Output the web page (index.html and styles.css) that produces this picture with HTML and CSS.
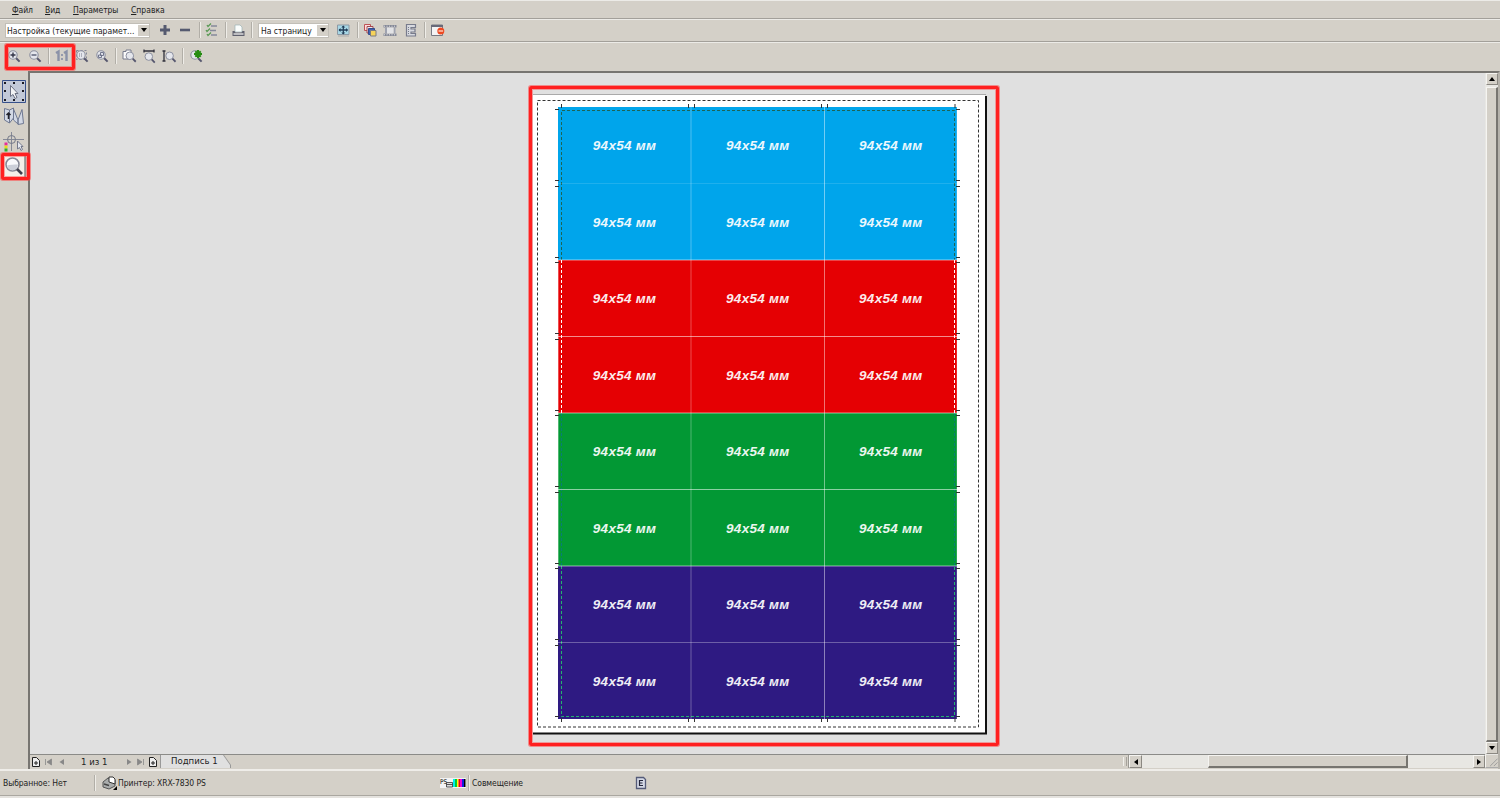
FILE: index.html
```html
<!DOCTYPE html>
<html lang="ru">
<head>
<meta charset="utf-8">
<title>94x54 мм</title>
<link rel="stylesheet" href="styles.css">
</head>
<body>
<svg width="0" height="0" class="defs">
  <defs>
    <g id="lens"><circle cx="7" cy="7" r="4.2" fill="#e4e6ec" stroke="#8b8f9f" stroke-width="1.1"/><path d="M10.2 10.2l3.400 3.400" stroke="#55566e" stroke-width="2"/></g>
  </defs>
</svg>
<nav class="menubar">
  <span class="m-file"><u>Ф</u>айл</span><span class="m-view"><u>В</u>ид</span><span class="m-params"><u>П</u>араметры</span><span class="m-help"><u>С</u>правка</span>
</nav>
<div class="toolbar primary">
  <div class="select wide"><span>Настройка (текущие парамет...</span><i></i></div>
  <svg class="icon g7" viewBox="0 0 16 16"><path d="M3 8h10M8 3v10" stroke="#555a70" stroke-width="3"/></svg>
  <svg class="icon g4" viewBox="0 0 16 16"><path d="M3 8h10" stroke="#555a70" stroke-width="2.6"/></svg>
  <b class="sep g6"></b>
  <svg class="icon g3" viewBox="0 0 16 16"><path d="M7 4h6M6 8.500h6M7 13h6" stroke="#85899a" stroke-width="1.300"/><path d="M3 3l1 1.500 3-3M2 8l1 1.500 3-3M3 12l1 1.500 3-3" fill="none" stroke="#5b9a55" stroke-width="1.300"/></svg>
  <b class="sep g5"></b>
  <svg class="icon g3" viewBox="0 0 16 16"><path d="M5 3h5l2 2v5H5z" fill="#fafdfc" stroke="#9bb2b4" stroke-width=".7"/><path d="M2.500 9h2l1 1.500h6l1-1.500h2v5h-12z" fill="#60616e"/><path d="M3.500 12h10" stroke="#e6e6e6" stroke-width="1.400"/></svg>
  <b class="sep g5"></b>
  <div class="select short g5"><span>На страницу</span><i></i></div>
  <svg class="icon g6" viewBox="0 0 16 16"><path d="M2.500 3h11.500v9.500H2.500z" fill="#a7d7e6" stroke="#8c99a5"/><path d="M4 8h8.500M8.300 4v8" stroke="#233e59" stroke-width="1.300"/><path d="M3.500 8l2-2v4zM13 8l-2-2v4zM8.300 3.500l-2 2h4zM8.300 12.500l-2-2h4z" fill="#233e59"/><path d="M3 14h11" stroke="#aaa"/></svg>
  <b class="sep g6"></b>
  <svg class="icon g3" viewBox="0 0 16 16"><path d="M2.500 2.500h6v6h-6z" fill="#ffdcdc" stroke="#bd5355"/><path d="M5 4.500h6v6.500H5z" fill="#ece9ec" stroke="#a14850"/><path d="M6.500 6.500h6v6h-6z" fill="#4163b1" stroke="#364b89"/><path d="M8.500 8.500h5.500v5.500H8.500z" fill="#f6d35a" stroke="#7a7b80"/></svg>
  <svg class="icon g4" viewBox="0 0 16 16"><path d="M1.500 3h13v2.500h-13zM1.500 11.500h13V14h-13z" fill="#858997"/><path d="M3 5.500h2v6H3zM11.500 5.500h2v6h-2z" fill="#9ea2af"/><path d="M5 5.500h6.500v6H5z" fill="#e2e3e6"/><path d="M2 4.200h12M2 12.800h12" stroke="#e0e0e4" stroke-dasharray="1 1.500"/></svg>
  <svg class="icon g5" viewBox="0 0 16 16"><path d="M3.500 2.500h9v3H8V7h4v3H8v1.500h4.500v2.500h-9z" fill="#d7d9df" stroke="#777b8c" stroke-width="1.200"/><path d="M5.500 5v7" stroke="#777b8c" stroke-dasharray="1 1"/></svg>
  <b class="sep g5"></b>
  <svg class="icon g3" viewBox="0 0 16 16"><path d="M2.500 3h11v10.500h-11z" fill="#f4f3f4" stroke="#777983"/><path d="M2 4h12" stroke="#686a79" stroke-width="2"/><circle cx="11.800" cy="9" r="3.500" fill="#ed4922"/><path d="M9.500 9h4.600" stroke="#ffe5d8" stroke-width="1.200"/></svg>
</div>
<div class="toolbar secondary">
  <svg class="icon" viewBox="0 0 16 16"><use href="#lens"/><path d="M4.500 7h5M7 4.500v5" stroke="#333548" stroke-width="1.400"/></svg>
  <svg class="icon g5" viewBox="0 0 16 16"><use href="#lens"/><path d="M4.500 7h5" stroke="#555972" stroke-width="1.400"/></svg>
  <b class="sep g5"></b>
  <svg class="icon g4" viewBox="0 0 16 16"><path d="M2 5l2.500-1.500v9.500M10 5l2.500-1.500v9.500" fill="none" stroke="#8b92a8" stroke-width="2.400"/><path d="M8 6v2M8 10v2" stroke="#8b92a8" stroke-width="1.700"/></svg>
  <svg class="icon g4" viewBox="0 0 16 16"><path d="M2.500 2.500h10v9h-10z" fill="none" stroke="#85899a" stroke-dasharray="2 2"/><use href="#lens"/><path d="M5 6h4M5 8h4" stroke="#777b8c" stroke-dasharray="1 1"/></svg>
  <svg class="icon g4" viewBox="0 0 16 16"><use href="#lens"/><path d="M4.500 7h3v2.500h-3zM6.500 4.500h3v3h-3z" fill="#dfe2ea" stroke="#666b83" stroke-width=".9"/></svg>
  <b class="sep g5"></b>
  <svg class="icon g4" viewBox="0 0 16 16"><path d="M2 3.500h3V2h5v9H2z" fill="#fbfbfb" stroke="#777b8c"/><g transform="translate(2.500 1.500) scale(.9)"><use href="#lens"/></g></svg>
  <svg class="icon g4" viewBox="0 0 16 16"><path d="M3 3h10M3 1.500v3M13 1.500v3" stroke="#30313c" stroke-width="1.300"/><g transform="translate(1.500 2.300) scale(.9)"><use href="#lens"/></g></svg>
  <svg class="icon g4" viewBox="0 0 16 16"><path d="M3 3v10M1.500 3h3M1.500 13h3" stroke="#30313c" stroke-width="1.300"/><g transform="translate(2.300 1.500) scale(.9)"><use href="#lens"/></g></svg>
  <b class="sep g5"></b>
  <svg class="icon g4" viewBox="0 0 16 16"><use href="#lens"/><path d="M10 2v8M6 6h8M7.300 3.300l5.400 5.400M12.700 3.300l-5.400 5.400" stroke="#258c12" stroke-width="2"/></svg>
</div>
<main class="main">
  <aside class="tools">
    <svg class="tool" viewBox="0 0 26 25"><path d="M2.500 1.500h23v22h-23z" fill="#c2c9d8" stroke="#37518b"/><g fill="#1b1b24"><path d="M4 3h2v2H4zM13 3h2v2h-2zM22 3h2v2h-2zM4 11h2v2H4zM22 11h2v2h-2zM4 20h2v2H4zM13 20h2v2h-2zM22 20h2v2h-2z"/></g><path d="M10.500 6.500v11l2.500-2 2 4 2-1-2-4h3z" fill="#f2f3f5" stroke="#6c7183"/></svg>
    <svg class="tool" viewBox="0 0 26 25"><path d="M4.500 4.500l5 1.500v13l-5-3zM9.500 6l4-2v10l-4 5zM13.500 5l4.500 11v4l-4.500-4zM18 16l4-10.500 1.500 14-5.500 1z" fill="#d2d8e5" stroke="#6e7892"/><path d="M8.500 15V9M6.500 11l2-2 2 2" fill="none" stroke="#22232c" stroke-width="1.500"/></svg>
    <svg class="tool" viewBox="0 0 26 25"><path d="M3 9.500h21M11.500 2v19" stroke="#858996"/><circle cx="11.500" cy="9.500" r="4" fill="none" stroke="#747989"/><path d="M4.500 12.500h3v3h-3z" fill="#e52c9b"/><path d="M4.500 15.500h3v3h-3z" fill="#e9db19"/><path d="M4.500 18.500h3v3h-3z" fill="#30ac2e"/><path d="M17.500 11v8l2-1.500 1.500 3 1.500-1-1.500-3h2z" fill="#e6e9f0" stroke="#74798b"/></svg>
    <svg class="tool" viewBox="0 0 26 25"><path d="M3 1h22v22H3z" fill="#f4efe8"/><path d="M25 1v22" stroke="#555"/><circle cx="12.500" cy="9.500" r="6.500" fill="#f8f9fb" stroke="#858896" stroke-width="1.500"/><path d="M7 10.500c3-1 7-1 11-1-1 7-9 8-11 1z" fill="#cbcfd8"/><path d="M17 14l5 5" stroke="#3f404e" stroke-width="2.700"/></svg>
  </aside>
  <section class="work">
    <div class="view">
      <div class="canvas">
        <div class="sheet">
          <div class="cards">
            <div class="row cyan"><span>94x54 мм</span><span>94x54 мм</span><span>94x54 мм</span></div>
            <div class="row cyan"><span>94x54 мм</span><span>94x54 мм</span><span>94x54 мм</span></div>
            <div class="row red"><span>94x54 мм</span><span>94x54 мм</span><span>94x54 мм</span></div>
            <div class="row red"><span>94x54 мм</span><span>94x54 мм</span><span>94x54 мм</span></div>
            <div class="row green"><span>94x54 мм</span><span>94x54 мм</span><span>94x54 мм</span></div>
            <div class="row green"><span>94x54 мм</span><span>94x54 мм</span><span>94x54 мм</span></div>
            <div class="row blue"><span>94x54 мм</span><span>94x54 мм</span><span>94x54 мм</span></div>
            <div class="row blue"><span>94x54 мм</span><span>94x54 мм</span><span>94x54 мм</span></div>
          </div>
        </div>
        <svg class="marks" viewBox="528 85 474 664">
          <path d="M533 94.500h453" stroke="#aaa"/>
          <path d="M533 733.500h453V96" fill="none" stroke="#111" stroke-width="2"/>
          <path d="M537.500 100.500h441v626.500h-441z" fill="none" stroke="#333" stroke-dasharray="3 2"/>
          <g fill="none" stroke-dasharray="3 2">
            <path d="M561.500 260V110.500H954.500V260" stroke="#1d6555"/>
            <path d="M561.500 260v153M954.500 260v153" stroke="#fff"/>
            <path d="M561.500 413v153M954.500 413v153" stroke="#087c78"/>
            <path d="M561.500 566v150.500H954.500V566" stroke="#23b36f"/>
          </g>
          <g stroke="#fff" stroke-opacity=".55">
            <path d="M558 260h399M558 336.500h399M558 413h399M558 489.500h399M558 566h399"/>
            <path d="M558 642.500h399M558.500 260v306M957 107v612" stroke-opacity=".3"/>
            <path d="M558 183.500h399" stroke-opacity=".12"/>
            <path d="M691 107v612" stroke-opacity=".3"/><path d="M824.500 107v612" stroke-opacity=".45"/>
          </g>
          <g stroke="#333">
            <path id="ticks" d="M555 109.500h4M555 180.500h4M555 186.500h4M555 257.500h4M555 262.500h4M555 333.500h4M555 339.500h4M555 410.500h4M555 415.500h4M555 486.500h4M555 492.500h4M555 563.500h4M555 568.500h4M555 639.500h4M555 645.500h4M555 716.500h4"/>
            <use href="#ticks" x="401"/>
            <path id="cuts" d="M561.500 104v4M688.500 104v4M694.500 104v4M821.500 104v4M827.500 104v4M955 104v4"/>
            <use href="#cuts" y="614"/>
          </g>
        </svg>
        <div class="hilite h-sheet"></div>
      </div>
      <div class="vscroll"><b class="btn"><i class="up"></i></b><b class="thumb"></b><b class="btn"><i class="down"></i></b></div>
    </div>
    <div class="pager">
      <div class="pages">
        <svg class="pg" viewBox="0 0 10 12"><path d="M1.500 1.500h4l3 3v6h-7z" fill="#eee" stroke="#222"/><path d="M3 7h4M5 5v4" stroke="#222"/></svg>
        <svg class="nav n1" viewBox="0 0 8 10"><path d="M1.500 2v6M7.500 2L3 5l4.500 3z" fill="#888" stroke="#888" stroke-width=".8"/></svg>
        <svg class="nav n2" viewBox="0 0 8 10"><path d="M6 2L1.500 5 6 8z" fill="#888"/></svg>
        <span class="count">1 из 1</span>
        <svg class="nav n3" viewBox="0 0 8 10"><path d="M2 2l4.500 3L2 8z" fill="#888"/></svg>
        <svg class="nav n4" viewBox="0 0 8 10"><path d="M6.500 2v6M.5 2L5 5 .5 8z" fill="#888" stroke="#888" stroke-width=".8"/></svg>
        <svg class="pg n5" viewBox="0 0 10 12"><path d="M1.500 1.500h4l3 3v6h-7z" fill="#eee" stroke="#222"/><path d="M3 7h4M5 5v4" stroke="#222"/></svg>
        <div class="tab"><span>Подпись 1</span></div>
        <b class="splitter"></b>
      </div>
      <div class="hscroll"><b class="btn"><i class="left"></i></b><b class="thumb"></b><b class="btn"><i class="right"></i></b></div>
      <svg class="grip" viewBox="0 0 12 13"><path d="M4 12l8-8M8 12l4-4" stroke="#999"/></svg>
    </div>
  </section>
</main>
<footer class="status">
  <span class="s-sel">Выбранное: Нет</span><b class="sep"></b>
  <svg class="s-prn" viewBox="0 0 15 14"><path d="M1 6l5-4 7 2v6l-6 3-6-2z" fill="#a9acac" stroke="#555"/><path d="M7 6V1h4l2 2v5z" fill="#fff" stroke="#333"/><path d="M2 8l5 1.500" stroke="#444" stroke-width="1.500"/><path d="M15 10v4h-4z" fill="#000"/></svg>
  <span class="s-name">Принтер: XRX-7830 PS</span>
  <svg class="s-ps" viewBox="0 0 26 10"><path d="M0 0h26v10H0z" fill="#f3f3f3"/><text x="0" y="6" class="ps">PS</text><path d="M6.500 4.500h6V9h-6zM6.500 6.500h6" fill="#ddd" stroke="#333" stroke-width=".8"/><path d="M13 1h2v8h-2z" fill="#0ee"/><path d="M15 1h2v8h-2z" fill="#0c3"/><path d="M17 1h1.500v8H17z" fill="#ff0"/><path d="M18.500 1H20v8h-1.500z" fill="#e01"/><path d="M20 1h2v8h-2z" fill="#e0d"/><path d="M22 1h2v8h-2z" fill="#12d"/><path d="M24 1h1.500v8H24z"/></svg>
  <b class="sep s-sep2"></b><span class="s-mode">Совмещение</span>
  <svg class="s-e" viewBox="0 0 12 14"><path d="M1.500 1.500h7l2 2v9h-9z" fill="#d5d9e6" stroke="#555b78" stroke-width="1.300"/><path d="M8 4.500H4.500v5H8M4.500 7h3" fill="none" stroke="#22253a" stroke-width="1.200"/></svg>
</footer>
<div class="hilite h-zoom"></div>
<div class="hilite h-lens"></div>
</body>
</html>
```
FILE: styles.css
```css
* { box-sizing: border-box; }
body {
  margin: 0; width: 1500px; height: 798px; overflow: hidden; position: relative;
  display: flex; flex-direction: column; background: #d4d0c8; color: #222;
  font-family: "DejaVu Sans Condensed", "DejaVu Sans", sans-serif; font-size: 8.5px; line-height: 12px; white-space: nowrap;
}
.defs { position: absolute; }
svg { display: block; flex: none; }
span { flex: none; }
i, b { display: block; flex: none; }

.menubar { height: 19px; display: flex; align-items: center; padding: 0 0 0 12px; border-top: 1px solid #ecebe7; border-bottom: 1px solid #a3a09a; }
.m-file { width: 33px; }
.m-view { width: 28px; }
.m-params { width: 58px; }
.m-params, .m-view, .m-file { letter-spacing: -.05px; }
u { text-underline-offset: 1px; text-decoration-thickness: 1px; }

.toolbar { display: flex; align-items: center; border-top: 1px solid #ecebe7; }
.primary { height: 23px; padding: 0 0 1px 5px; border-bottom: 1px solid #a3a09a; }
.secondary { height: 29px; padding: 0 0 3px 6px; }
.icon { width: 16px; height: 16px; }
.g3 { margin-left: 3px; }
.g4 { margin-left: 4px; }
.g5 { margin-left: 5px; }
.g6 { margin-left: 6px; }
.g7 { margin-left: 7px; }
.sep { width: 2px; height: 16px; border-left: 1px solid #b1aea7; border-right: 1px solid #efede8; }
.select { height: 15px; display: flex; justify-content: space-between; background: #fff; border: 1px solid #c1beb7; padding-left: 1px; line-height: 14px; }
.select i { width: 11px; background: #d4d0c8; margin: 1px 0; display: flex; align-items: center; justify-content: center; }
.select i::after { content: ""; border: 3px solid transparent; border-top: 4px solid #000; border-bottom: 0; }
.wide { width: 145px; }
.short { width: 71px; padding-left: 2px; }

.main { height: 698px; flex: none; display: flex; }
.tools { width: 28px; padding-top: 8px; }
.tool { width: 26px; height: 25px; }
.tool + .tool { margin-top: .4px; }
.work { flex: 1; display: flex; flex-direction: column; border-left: 2px solid #777571; border-top: 2px solid #777571; border-right: 2px solid #b5b2ab; }
.view { height: 682px; display: flex; }
.canvas { width: 1455px; background: #e0e0e0; position: relative; border-bottom: 1px solid #8b8b88; }
.sheet { position: absolute; left: 503px; top: 22px; width: 452px; height: 638px; background: #fff; padding: 12px 28px 14px 25px; }
.cards { height: 612px; display: grid; grid-template-rows: repeat(8, 1fr); }
.row { display: grid; grid-template-columns: 133px 133.5px 132.5px; align-items: center; text-align: center; color: #fff; font: italic bold 13.5px/20px "Liberation Sans", Arial, sans-serif; letter-spacing: .25px; padding-top: 2px; }
.row span { opacity: .92; }
.cyan { background: #00a5eb; }
.red { background: #e50003; }
.green { background: #029834; }
.blue { background: #2e1a82; }
.marks { position: absolute; left: 498px; top: 12px; width: 474px; height: 664px; }
.hilite { position: absolute; border: 3px solid #ff2020; border-radius: 2px; box-shadow: 0 0 0 1px rgba(255, 70, 70, .55), inset 0 0 0 1px rgba(255, 70, 70, .45); }
.h-sheet { left: 499px; top: 13px; width: 470px; height: 660px; }
.h-zoom { left: 5px; top: 44px; width: 70px; height: 26px; }
.h-lens { left: 1px; top: 153px; width: 29px; height: 27px; }

.btn { width: 12px; height: 12px; background: #d4d0c8; border: 1px solid; border-color: #f5f4f1 #8b8882 #8b8882 #f5f4f1; display: flex; align-items: center; justify-content: center; }
.thumb { background: #d4d0c8; border: 1px solid #f5f4f1; border-right: 2px solid #777570; border-bottom: 2px solid #777570; }
.vscroll { width: 13px; background: #e8e7e3; padding-left: 1px; }
.vscroll .thumb { height: 655px; margin: 2px 0 0; }
.btn i { border: 3px solid transparent; }
.btn .up { border-top: 0; border-bottom: 4px solid #000; }
.btn .down { border-bottom: 0; border-top: 4px solid #000; }
.btn .left { border-left: 0; border-right: 4px solid #000; }
.btn .right { border-right: 0; border-left: 4px solid #000; }

.pager { height: 13px; display: flex; }
.pages { width: 1099px; display: flex; align-items: center; padding-left: 1px; border-right: 1px solid #9b9993; }
.splitter { width: 4px; height: 9px; margin: 0 1px 0 auto; border-left: 1px solid #f1f0ec; border-right: 1px solid #a5a29b; }
.hscroll { width: 356px; display: flex; background: #e8e7e3; }
.hscroll .thumb { width: 200px; height: 13px; margin: 0 65px 0 66px; }
.hscroll .btn { width: 13px; height: 13px; }
.hscroll .btn:last-child { width: 12px; }
.pg { width: 10px; height: 12px; }
.nav { width: 8px; height: 10px; }
.n1 { margin-left: 3px; }
.n2 { margin-left: 6px; }
.n3 { margin-left: 2px; }
.n4 { margin-left: 4px; }
.n5 { margin-left: 3px; }
.count { margin-left: 15px; width: 42px; font-size: 9.5px; }
.tab { margin-left: 2px; width: 71px; height: 13px; background: #999; clip-path: polygon(0 0, 64px 0, 71px 10px, 71px 13px, 0 13px); display: flex; padding: 0 1px; }
.tab span { width: 69px; background: #e0e0e0; padding-left: 10px; font-size: 9.5px; clip-path: polygon(0 0, 62px 0, 69px 10px, 69px 13px, 0 13px); }
.grip { width: 13px; height: 13px; border-left: 1px solid #f5f4f1; border-bottom: 1px solid #aaa; }

.status { height: 29px; flex: none; display: flex; align-items: center; padding: 0 0 4px 3px; border-top: 2px solid #efede9; box-shadow: inset 0 -2px #e4e2de, inset 0 -3px #aaa7a0; }
.status span { letter-spacing: -.06px; }
.s-sel { width: 91px; }
.s-prn { width: 15px; height: 14px; margin: 0 1px 0 6px; }
.s-name { width: 322px; }
.s-ps { width: 26px; height: 10px; }
.ps { font-size: 6.5px; }
.s-sep2 { margin: 0 2px 0 2px; }
.s-mode { width: 163px; }
.s-e { width: 12px; height: 14px; }
```
